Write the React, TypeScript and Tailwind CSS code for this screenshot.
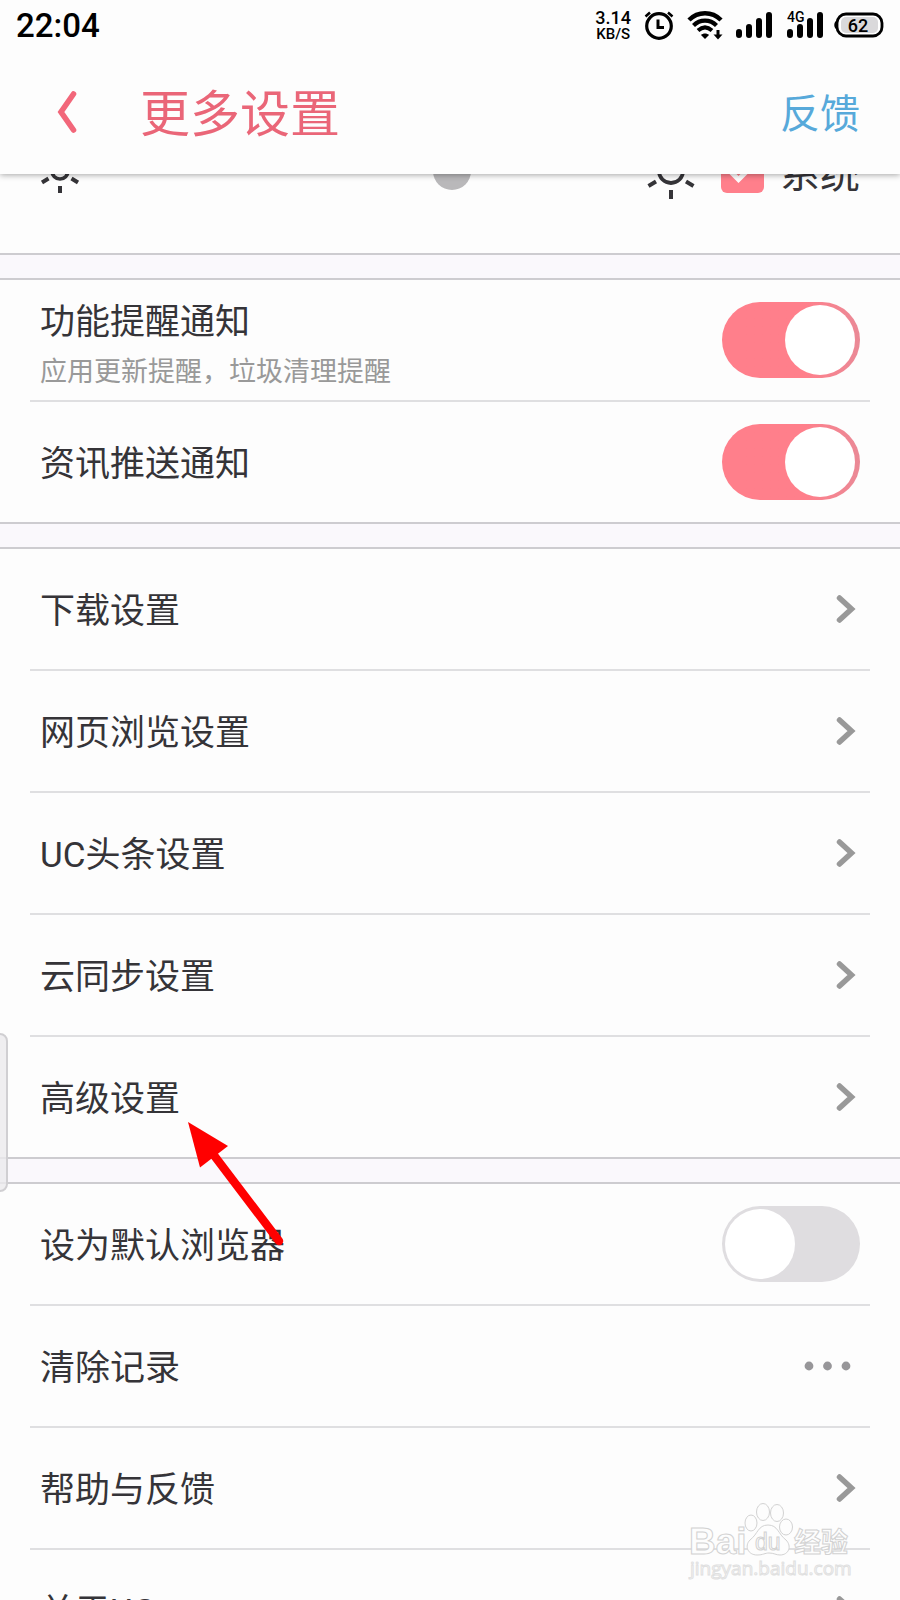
import { useState } from 'react';
import type { ReactNode } from 'react';

type Item = {
  id: string;
  label: string;
  hint?: string;
  kind: 'toggle' | 'link' | 'more';
  on?: boolean;
  pointed?: boolean;
};

const groups: Item[][] = [
  [
    { id: 'feature-notice', label: '功能提醒通知', hint: '应用更新提醒，垃圾清理提醒', kind: 'toggle', on: true },
    { id: 'news-push', label: '资讯推送通知', kind: 'toggle', on: true },
  ],
  [
    { id: 'download', label: '下载设置', kind: 'link' },
    { id: 'browsing', label: '网页浏览设置', kind: 'link' },
    { id: 'headline', label: 'UC头条设置', kind: 'link' },
    { id: 'cloud', label: '云同步设置', kind: 'link' },
    { id: 'advanced', label: '高级设置', kind: 'link', pointed: true },
  ],
  [
    { id: 'default-browser', label: '设为默认浏览器', kind: 'toggle', on: false },
    { id: 'clear', label: '清除记录', kind: 'more' },
    { id: 'help', label: '帮助与反馈', kind: 'link' },
    { id: 'about', label: '关于UC', kind: 'link' },
  ],
];

function SignalBars() {
  return (
    <g stroke="#000" strokeWidth="6" strokeLinecap="round">
      <path d="M3 28v3M13 23v8M23 17v14M33 11v20" />
    </g>
  );
}

function StatusBar() {
  return (
    <div className="flex h-[50px] items-center justify-between px-4 text-black">
      <span className="text-[33px] leading-none font-medium">22:04</span>
      <div className="flex items-center">
        <div className="mr-[13px] flex flex-col items-center font-medium">
          <span className="text-[18px] leading-[18px]">3.14</span>
          <span className="text-[15px] leading-[15px]">KB/S</span>
        </div>
        <svg className="mr-[13px] h-[30px] w-[30px]" viewBox="0 0 30 30" fill="none" stroke="#000">
          <circle cx="15" cy="16" r="12.3" strokeWidth="3.2" />
          <path d="M14 9.500v8h6" strokeWidth="3" />
          <path d="M1.500 6.500L6 2.500M28.500 6.500L24 2.500" strokeWidth="2.500" />
        </svg>
        <svg className="mr-[13px] h-[30px] w-[36px]" viewBox="0 0 36 30" fill="none" stroke="#000">
          <path d="M2 10C11 1 25 1 34 10" strokeWidth="4.500" />
          <path d="M6.500 15.500C13 9 23 9 29.500 15.500" strokeWidth="4.200" />
          <path d="M11 20.500C15.500 16.500 20.500 16.500 25 20.500" strokeWidth="4" />
          <path d="M18 29l-4-4c2-2 6-2 8 0z" fill="#000" stroke="none" />
          <path d="M31 20v6" strokeWidth="3" />
          <path d="M26.500 24.500h9L31 29.500z" fill="#000" stroke="none" />
        </svg>
        <svg className="mr-[13px] h-[36px] w-[38px]" viewBox="0 3 38 36">
          <SignalBars />
        </svg>
        <svg className="mr-2 h-[36px] w-[38px]" viewBox="0 3 38 36">
          <SignalBars />
          <text x="0" y="18" fontSize="14" fontWeight="500">4G</text>
        </svg>
        <svg className="h-[26px] w-[51px]" viewBox="0 0 51 26">
          <path d="M5 8C0 9 0 17 5 18z" />
          <rect x="4" y="2" width="45" height="22" rx="9" fill="#fff" stroke="#000" strokeWidth="2.800" />
          <rect x="8" y="5" width="37" height="16" rx="5" fill="#dad9db" />
          <text x="25" y="19.500" fontSize="18" fontWeight="500" textAnchor="middle">62</text>
        </svg>
      </div>
    </div>
  );
}

function Header() {
  return (
    <header className="relative z-10 shrink-0 bg-[#fdfdfd] shadow-[0_1px_6px_rgba(0,0,0,0.35)]">
      <StatusBar />
      <div className="flex h-[124px] items-center px-10">
        <button type="button" aria-label="返回" className="mr-[54px] ml-4">
          <svg className="h-[46px] w-[30px]" viewBox="0 0 30 46" fill="none">
            <path d="M17.500 5L5 23L17.500 41" stroke="#f2677a" strokeWidth="5.600" strokeLinecap="round" />
          </svg>
        </button>
        <h1 className="flex-1 pt-1.5 text-[50px] leading-none text-[#ea6678]">更多设置</h1>
        <a href="#feedback" className="pt-1.5 text-[40px] leading-none text-[#57a9da]">反馈</a>
      </div>
    </header>
  );
}

function Sun({ large }: { large?: boolean }) {
  return (
    <svg className={large ? 'h-[56px] w-[52px]' : 'h-[44px] w-[40px]'} viewBox={large ? '-26 -28 52 56' : '-20 -22 40 44'} fill="none" stroke="#353438">
      {large ? (
        <>
          <circle r="12" strokeWidth="3.800" />
          <path d="M0 19v9M0-19v-9M-15 10.500L-22.500 15M15 10.500L22.500 15M-15-10.500L-22.500-15M15-10.500L22.500-15" strokeWidth="4" />
        </>
      ) : (
        <>
          <circle r="8" strokeWidth="3.600" />
          <path d="M0 15v7M0-15v-7M-11.500 7.500L-18 11.500M11.500 7.500L18 11.500M-11.500-7.500L-18-11.500M11.500-7.500L18-11.500" strokeWidth="4" />
        </>
      )}
    </svg>
  );
}

function BrightnessRow() {
  const [level, setLevel] = useState(68);
  const [system, setSystem] = useState(true);

  return (
    <div className="flex h-[164px] items-center px-10">
      <Sun />
      <input
        type="range"
        aria-label="亮度"
        value={level}
        onChange={(e) => setLevel(Number(e.target.value))}
        className="mx-4 h-[38px] min-w-0 flex-1 appearance-none bg-transparent [&::-webkit-slider-runnable-track]:h-1 [&::-webkit-slider-runnable-track]:bg-[#dedde0] [&::-webkit-slider-thumb]:-mt-[17px] [&::-webkit-slider-thumb]:size-[38px] [&::-webkit-slider-thumb]:appearance-none [&::-webkit-slider-thumb]:rounded-full [&::-webkit-slider-thumb]:bg-[#b9b8ba]"
      />
      <Sun large />
      <label className="ml-6 flex items-center gap-4">
        <span className="grid">
          <input
            type="checkbox"
            checked={system}
            onChange={(e) => setSystem(e.target.checked)}
            className="col-start-1 row-start-1 size-[43px] appearance-none rounded-md bg-[#dedde0] checked:bg-[#ff7f8b]"
          />
          <svg className="pointer-events-none col-start-1 row-start-1 size-[43px]" viewBox="0 0 43 43" fill="none">
            <path d="M7 19L17.500 29.500L35 12" stroke="#fff" strokeWidth="5" />
          </svg>
        </span>
        <span className="pt-2 text-[40px] leading-none text-[#353438]">系统</span>
      </label>
    </div>
  );
}

function Toggle({ id, initial }: { id: string; initial: boolean }) {
  const [on, setOn] = useState(initial);
  return (
    <input
      id={id}
      type="checkbox"
      role="switch"
      checked={on}
      onChange={(e) => setOn(e.target.checked)}
      className="h-[76px] w-[138px] shrink-0 appearance-none rounded-full bg-[#dfdde0] p-[3px] before:block before:size-[70px] before:rounded-full before:bg-white checked:bg-linear-to-r checked:from-[#ff7f8b] checked:from-60% checked:to-[#ea8996] checked:before:translate-x-[60px]"
    />
  );
}

function Chevron() {
  return (
    <svg className="mr-0.5 h-[30px] w-[22px]" viewBox="0 0 22 30" fill="none">
      <path d="M3.500 4L15.500 15L3.500 26" stroke="#999" strokeWidth="5.500" strokeLinecap="round" />
    </svg>
  );
}

function Dots() {
  return (
    <svg className="mr-2 h-[10px] w-[48px]" viewBox="0 0 48 10" fill="#979699">
      <circle cx="5" cy="5" r="4.400" />
      <circle cx="23.500" cy="5" r="4.400" />
      <circle cx="42" cy="5" r="4.400" />
    </svg>
  );
}

function Pointer() {
  return (
    <svg className="pointer-events-none absolute top-[83px] left-[156px] z-10 h-[128px] w-[102px]" viewBox="0 0 102 128">
      <path d="M27 34L93 121" stroke="#f00" strokeWidth="8.500" strokeLinecap="round" />
      <path d="M2 2L42 26L14 47.500z" fill="#f00" />
    </svg>
  );
}

const rowClass = 'flex h-[120px] w-full items-center justify-between px-[10px] text-left';

function Row({ item }: { item: Item }) {
  const text: ReactNode = (
    <span className={item.hint ? 'flex flex-col pt-[14px]' : 'pt-1.5'}>
      <span className="text-[35px] leading-[50px] text-[#353438]">{item.label}</span>
      {item.hint && <span className="text-[27px] leading-[48px] text-[#999]">{item.hint}</span>}
    </span>
  );

  return (
    <li className="relative border-b-2 border-[#dfdfe1] last:border-b-0">
      {item.kind === 'toggle' && (
        <label htmlFor={item.id} className={rowClass}>
          {text}
          <Toggle id={item.id} initial={!!item.on} />
        </label>
      )}
      {item.kind === 'link' && (
        <a href={`#${item.id}`} className={rowClass}>
          {text}
          <Chevron />
        </a>
      )}
      {item.kind === 'more' && (
        <button type="button" className={rowClass}>
          {text}
          <Dots />
        </button>
      )}
      {item.pointed && <Pointer />}
    </li>
  );
}

function Watermark() {
  return (
    <svg className="pointer-events-none absolute right-[46px] bottom-[16px] z-10 h-[84px] w-[166px]" viewBox="0 0 166 84" fill="#fdfdfd" stroke="#d2d2d2" strokeWidth="1">
      <text x="1" y="54" fontSize="37" fontWeight="700" fontFamily="Liberation Sans, sans-serif">Bai</text>
      <ellipse cx="63" cy="23" rx="6" ry="8" />
      <ellipse cx="75" cy="12" rx="6.500" ry="8.500" />
      <ellipse cx="89" cy="13" rx="6.500" ry="8.500" />
      <ellipse cx="98" cy="27" rx="6.500" ry="8" />
      <path d="M80 25C70 25 70 34 62 40C56 46 60 55 69 55C75 55 77 53 81 53C86 53 88 55 92 55C101 55 104 46 98 40C90 34 90 25 80 25z" />
      <text x="67" y="50" fontSize="23" fontFamily="Liberation Sans, sans-serif">du</text>
      <text x="106" y="52" fontSize="27" fontWeight="700">经验</text>
      <text x="2" y="75" fontSize="19" fontFamily="Open Sans, sans-serif" stroke="#e0e0e0">jingyan.baidu.com</text>
    </svg>
  );
}

export default function App() {
  return (
    <div lang="zh-CN" className="relative flex h-screen flex-col overflow-hidden bg-[#fdfdfd] font-[Roboto,'Noto_Sans_CJK_SC',sans-serif]">
      <Header />
      {/* list is scrolled a little way under the header */}
      <main className="-mt-[85px]">
        <BrightnessRow />
        {groups.map((items) => (
          <section key={items[0].id}>
            <div className="h-[27px] border-y-2 border-[#cdccd0] bg-[#faf8fc]" />
            <ul className="px-[30px]">
              {items.map((item) => (
                <Row key={item.id} item={item} />
              ))}
            </ul>
          </section>
        ))}
      </main>
      <div className="absolute top-[1033px] -left-2 z-10 h-[159px] w-4 rounded-lg border-2 border-[#d0cfd2] bg-[#ebeaec]/80" />
      <Watermark />
    </div>
  );
}
